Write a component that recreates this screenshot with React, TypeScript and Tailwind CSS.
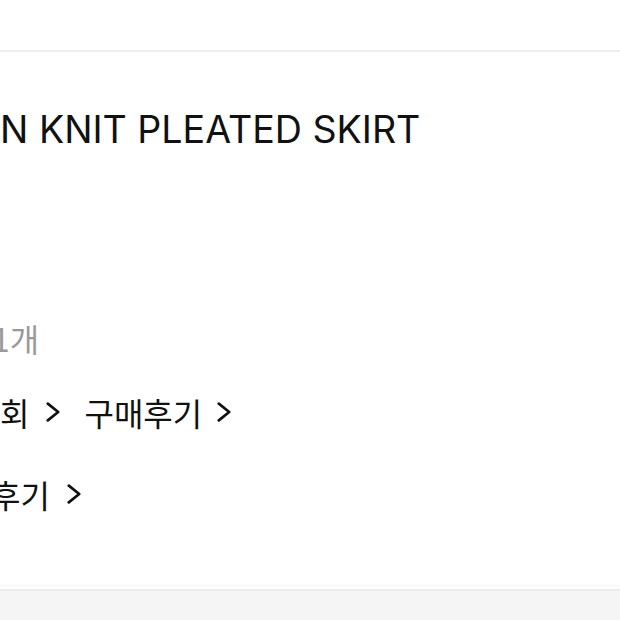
import React from 'react'

function Chevron() {
  return (
    <svg width="14" height="20" viewBox="0 0 14 20" className="shrink-0">
      <polyline points="1.8,1.6 12.2,10 1.8,18.4" fill="none" stroke="#111" strokeWidth="2.7" strokeLinecap="round" strokeLinejoin="round" />
    </svg>
  )
}

export default function App() {
  const latin = { fontFamily: 'Inter, "Noto Sans CJK KR", sans-serif' }
  const kr = { fontFamily: '"Noto Sans CJK KR", "Noto Sans", sans-serif' }
  return (
    <div className="w-[620px] h-[620px] overflow-hidden bg-white flex flex-col">
      <div className="h-[50px]" />
      <div className="h-[2px] bg-[#eeeeee]" />

      {/* Title */}
      <h1
        className="mt-[56px] text-[37.6px] leading-[44px] text-[#111] whitespace-nowrap"
        style={latin}
      >
        N KNIT PLEATED SKIRT
      </h1>

      {/* Option count */}
      <p className="mt-[166px] text-[32px] leading-[40px] text-[#9a9a9a] whitespace-nowrap -ml-[8px]" style={kr}>
        1개
      </p>

      {/* Links */}
      <div className="mt-[34px] flex items-center whitespace-nowrap text-[32px] leading-[40px] text-[#111]" style={kr}>
        <span className="flex items-center gap-[17px]">
          <span>회</span>
          <Chevron />
        </span>
        <span className="flex items-center gap-[15px] ml-[24px]">
          <span>구매후기</span>
          <Chevron />
        </span>
      </div>

      <div className="mt-[42px] -ml-[9px] flex items-center gap-[17px] whitespace-nowrap text-[32px] leading-[40px] text-[#111]" style={kr}>
        <span>후기</span>
        <Chevron />
      </div>

      <div className="flex-1" />
      <div className="h-[1px] bg-[#f6f6f6] mb-[3px]" />
      <div className="h-[2px] bg-[#ececec]" />
      <div className="h-[29px] bg-[#f5f5f5]" />
    </div>
  )
}
